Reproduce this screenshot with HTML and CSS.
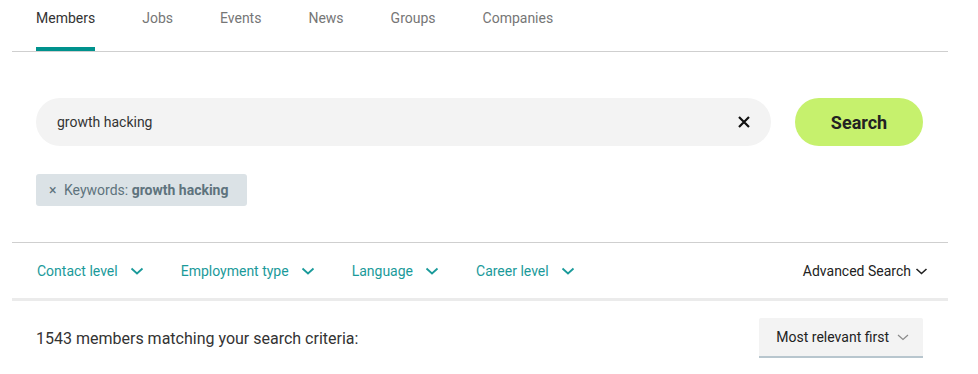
FILE: index.html
```html
<!DOCTYPE html>
<html>
<head>
  <title>Members search</title>
  <meta charset="UTF-8">
  <link rel="stylesheet" href="styles.css">
</head>
<body>
  <div class="container">
    <nav class="tabs">
      <a class="tab active" href="#">Members</a>
      <a class="tab" href="#">Jobs</a>
      <a class="tab" href="#">Events</a>
      <a class="tab" href="#">News</a>
      <a class="tab" href="#">Groups</a>
      <a class="tab" href="#">Companies</a>
    </nav>

    <div class="search-area">
      <form class="search-form">
        <div class="search-field">
          <input type="text" class="search-input" value="growth hacking">
          <button type="button" class="clear-button" aria-label="Clear">
            <svg width="14" height="14" viewBox="0 0 14 14"><path d="M2 2 L12 12 M12 2 L2 12" stroke="#111" stroke-width="2.2" fill="none"/></svg>
          </button>
        </div>
        <button type="submit" class="search-button">Search</button>
      </form>
      <div class="chips">
        <span class="chip"><span class="chip-x">×</span> Keywords: <b>growth hacking</b></span>
      </div>
    </div>

    <div class="filters">
      <button class="filter">Contact level <svg class="chev" width="14" height="10" viewBox="0 0 14 10"><path d="M1.5 2.5 L7 7.5 L12.5 2.5" stroke="currentColor" stroke-width="1.8" fill="none"/></svg></button>
      <button class="filter">Employment type <svg class="chev" width="14" height="10" viewBox="0 0 14 10"><path d="M1.5 2.5 L7 7.5 L12.5 2.5" stroke="currentColor" stroke-width="1.8" fill="none"/></svg></button>
      <button class="filter">Language <svg class="chev" width="14" height="10" viewBox="0 0 14 10"><path d="M1.5 2.5 L7 7.5 L12.5 2.5" stroke="currentColor" stroke-width="1.8" fill="none"/></svg></button>
      <button class="filter">Career level <svg class="chev" width="14" height="10" viewBox="0 0 14 10"><path d="M1.5 2.5 L7 7.5 L12.5 2.5" stroke="currentColor" stroke-width="1.8" fill="none"/></svg></button>
      <button class="advanced">Advanced Search <svg width="13" height="10" viewBox="0 0 13 10"><path d="M1.5 3 L6.5 7.5 L11.5 3" stroke="#222" stroke-width="1.6" fill="none"/></svg></button>
    </div>

    <div class="results-bar">
      <p class="results-count">1543 members matching your search criteria:</p>
      <button class="sort">Most relevant first <svg width="12" height="8" viewBox="0 0 12 8"><path d="M1 2 L6 6.5 L11 2" stroke="#8a8a8a" stroke-width="1.2" fill="none"/></svg></button>
    </div>
  </div>
</body>
</html>
```

FILE: styles.css
```css
body {
  font-family: Roboto, "Liberation Sans", sans-serif;
  color: #333;
  margin: 0;
  padding: 0;
  background: #fff;
}

button {
  font-family: inherit;
  border: none;
  background: none;
  padding: 0;
  cursor: pointer;
}

.container {
  width: 936px;
  margin-left: 12px;
}

.tabs {
  display: flex;
  border-bottom: 1px solid #cfcfcf;
  padding-left: 24px;
  height: 51px;
}

.tab {
  font-size: 14px;
  color: #767676;
  text-decoration: none;
  line-height: 36px;
  margin-right: 47px;
  border-bottom: 4px solid transparent;
  box-sizing: border-box;
  height: 51px;
}

.tab.active {
  color: #333;
  border-bottom-color: #00928d;
}

.search-area {
  padding: 46px 25px 36px 24px;
  border-bottom: 1px solid #cfcfcf;
}

.search-form {
  display: flex;
  gap: 24px;
  margin: 0;
}

.search-field {
  flex: 1;
  display: flex;
  align-items: center;
  background: #f3f3f3;
  border-radius: 24px;
  height: 48px;
  padding: 0 20px 0 21px;
}

.search-input {
  flex: 1;
  border: none;
  background: transparent;
  font-family: inherit;
  font-size: 14px;
  color: #333;
  outline: none;
  padding: 0;
}

.clear-button {
  width: 14px;
  height: 14px;
  display: flex;
}

.search-button {
  width: 128px;
  height: 48px;
  border-radius: 24px;
  background: #c6f16d;
  color: #222;
  font-size: 18px;
  font-weight: 700;
}

.chips {
  margin-top: 28px;
  display: flex;
}

.chip {
  background: #dbe2e6;
  color: #5e737d;
  font-size: 14px;
  height: 32px;
  line-height: 32px;
  border-radius: 3px;
  padding: 0 19px 0 13px;
}

.chip-x {
  font-size: 14px;
  margin-right: 4px;
}

.filters {
  display: flex;
  align-items: center;
  height: 55px;
  padding: 0 20px 0 25px;
  border-bottom: 3px solid #ebebeb;
}

.filter {
  color: #1a9a9a;
  font-size: 14px;
  margin-right: 37px;
  display: flex;
  align-items: center;
  gap: 12px;
}

.advanced {
  margin-left: auto;
  color: #222;
  font-size: 14px;
  display: flex;
  align-items: center;
  gap: 4px;
}

.results-bar {
  display: flex;
  align-items: center;
  justify-content: space-between;
  padding: 17px 25px 0 24px;
}

.results-count {
  margin: 0;
  font-size: 16px;
  color: #333;
}

.sort {
  background: #f3f3f3;
  border-bottom: 2px solid #b8c6ce;
  height: 40px;
  padding: 0 14px 0 17px;
  font-size: 14px;
  color: #222;
  display: flex;
  align-items: center;
  gap: 8px;
  border-radius: 2px 2px 0 0;
}
```
